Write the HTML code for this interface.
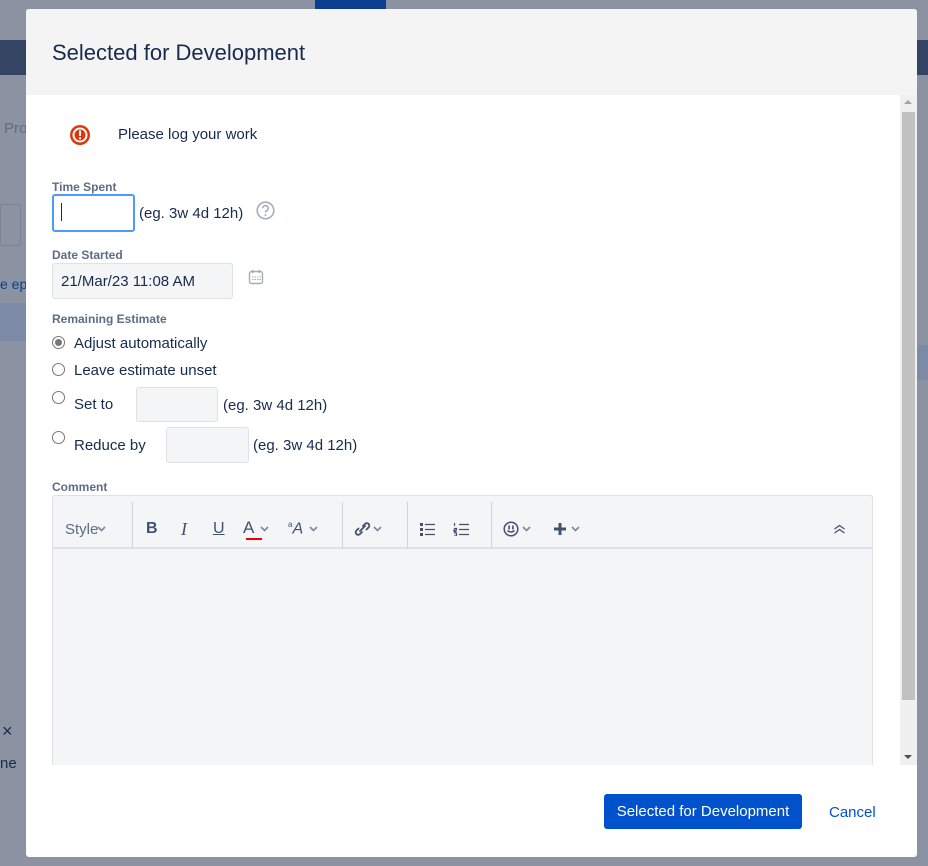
<!DOCTYPE html>
<html><head><style>
*{box-sizing:border-box;margin:0;padding:0}
body{width:928px;height:866px;overflow:hidden;background:#8b93a3;font-family:"Liberation Sans",sans-serif;position:relative;color:#172b4d}
.a{position:absolute}
.lbl{font-size:12px;font-weight:bold;color:#5e6c84}
.t{font-size:15px;color:#172b4d}
.radio{width:13px;height:13px;border:1px solid #777;border-radius:50%;background:#fff}
.inp{background:#f4f5f7;border:1px solid #dfe1e6;border-radius:3px}
.tb{font-size:16px;color:#42526e}
.sep{width:1px;height:46px;background:#d0d3d9}
</style></head><body>
<div class="a" style="left:315px;top:0;width:71px;height:9px;background:#0b3f8d"></div>
<div class="a" style="left:0;top:40px;width:26px;height:35px;background:#344563"></div>
<div class="a" style="left:917px;top:40px;width:11px;height:35px;background:#344563"></div>
<div class="a" style="left:0;top:303px;width:26px;height:38px;background:#7d8aa6"></div>
<div class="a" style="left:917px;top:345px;width:11px;height:35px;background:#7d8aa6"></div>
<div class="a" style="left:4px;top:120px;font-size:15px;color:#5e6c84">Pro</div>
<div class="a" style="left:0;top:276px;font-size:14px;color:#0b3f8d">e ep</div>
<div class="a" style="left:0;top:204px;width:21px;height:42px;border:1px solid #7a8293;border-radius:3px"></div>
<div class="a" style="left:2px;top:721px;font-size:18px;color:#172b4d">×</div>
<div class="a" style="left:0;top:755px;font-size:15px;color:#172b4d">ne</div>

<div class="a" style="left:26px;top:9px;width:891px;height:848px;background:#fff;border-radius:3px;overflow:hidden">
 <div class="a" style="left:0;top:0;width:891px;height:86px;background:#f4f4f4"></div>
 <div class="a" style="left:26px;top:31px;font-size:22px;color:#172b4d">Selected for Development</div>
 <div class="a" style="left:874px;top:86px;width:17px;height:670px;background:#f0f0f0"></div>
 <div class="a" style="left:876px;top:103px;width:13px;height:588px;background:#c1c1c1"></div>
 <div class="a" style="left:878px;top:91px;width:0;height:0;border-left:4px solid transparent;border-right:4px solid transparent;border-bottom:4px solid #a3a3a3"></div>
 <div class="a" style="left:878px;top:746px;width:0;height:0;border-left:4px solid transparent;border-right:4px solid transparent;border-top:4px solid #505050"></div>
</div>

<svg class="a" style="left:68px;top:123px" width="24" height="24" viewBox="0 0 24 24"><circle cx="12" cy="12" r="10" fill="#de350b"/><circle cx="12" cy="12" r="6.5" fill="none" stroke="#fff" stroke-width="2"/><rect x="11" y="7.5" width="2" height="5.5" fill="#fff"/><rect x="11" y="14.2" width="2" height="2" fill="#fff"/></svg>
<div class="a t" style="left:118px;top:126px">Please log your work</div>

<div class="a lbl" style="left:52px;top:180px">Time Spent</div>
<div class="a" style="left:52px;top:194px;width:83px;height:38px;border:2px solid #4c9aff;border-radius:3px;background:#fff"></div>
<div class="a" style="left:61px;top:203px;width:1px;height:18px;background:#172b4d"></div>
<div class="a t" style="left:139px;top:205px">(eg. 3w 4d 12h)</div>
<svg class="a" style="left:256px;top:201px" width="19" height="19" viewBox="0 0 19 19"><circle cx="9.5" cy="9.5" r="8.3" fill="none" stroke="#a5adba" stroke-width="1.6"/><path d="M6.8 7.3a2.7 2.7 0 1 1 3.8 2.4c-.8.4-1.1.9-1.1 1.8" fill="none" stroke="#a5adba" stroke-width="1.6"/><circle cx="9.5" cy="14" r="1" fill="#a5adba"/></svg>

<div class="a lbl" style="left:52px;top:248px">Date Started</div>
<div class="a inp" style="left:52px;top:263px;width:181px;height:36px"></div>
<div class="a t" style="left:61px;top:273px">21/Mar/23 11:08 AM</div>
<svg class="a" style="left:248px;top:269px" width="17" height="16" viewBox="0 0 17 16"><rect x="1.5" y="2.5" width="13" height="12" rx="2" fill="none" stroke="#a5adba" stroke-width="1.4"/><rect x="4" y="1" width="1.5" height="3" fill="#a5adba"/><rect x="10.5" y="1" width="1.5" height="3" fill="#a5adba"/><path d="M4 8h9M4 10.5h9" stroke="#a5adba" stroke-width="1" stroke-dasharray="1.5 1"/></svg>

<div class="a lbl" style="left:52px;top:312px">Remaining Estimate</div>
<div class="a radio" style="left:52px;top:336px"></div>
<div class="a" style="left:55px;top:339px;width:7px;height:7px;border-radius:50%;background:#777"></div>
<div class="a t" style="left:74px;top:335px">Adjust automatically</div>
<div class="a radio" style="left:52px;top:363px"></div>
<div class="a t" style="left:74px;top:362px">Leave estimate unset</div>
<div class="a radio" style="left:52px;top:391px"></div>
<div class="a t" style="left:74px;top:396px">Set to</div>
<div class="a inp" style="left:136px;top:387px;width:82px;height:35px"></div>
<div class="a t" style="left:223px;top:397px">(eg. 3w 4d 12h)</div>
<div class="a radio" style="left:52px;top:431px"></div>
<div class="a t" style="left:74px;top:437px">Reduce by</div>
<div class="a inp" style="left:166px;top:427px;width:83px;height:36px"></div>
<div class="a t" style="left:253px;top:437px">(eg. 3w 4d 12h)</div>

<div class="a lbl" style="left:52px;top:480px">Comment</div>
<div class="a" style="left:52px;top:495px;width:821px;height:270px;background:#f4f5f7;border:1px solid #dfe1e6;border-bottom:none;border-radius:3px 3px 0 0"></div>
<div class="a" style="left:53px;top:547px;width:819px;height:2px;background:#dfe1e6"></div>
<div class="a" style="left:65px;top:521px;font-size:15px;color:#5e6c84">Style</div>
<div class="a sep" style="left:132px;top:502px"></div>
<div class="a tb" style="left:146px;top:520px;font-weight:bold">B</div>
<div class="a tb" style="left:181px;top:519px;font-style:italic;font-family:'Liberation Serif',serif;font-size:18px">I</div>
<div class="a tb" style="left:213px;top:520px;text-decoration:underline">U</div>
<div class="a tb" style="left:243px;top:518px;font-size:17px">A</div>
<div class="a" style="left:246px;top:538px;width:16px;height:2px;background:#e00"></div>
<div class="a tb" style="left:288px;top:520px;font-style:italic"><sup style="font-size:8px;font-style:normal">a</sup>A</div>
<div class="a sep" style="left:342px;top:502px"></div>
<svg class="a" style="left:352px;top:520px" width="20" height="18" viewBox="0 0 20 18"><path d="M8 11l5-5M6.5 8.5l-2.3 2.3a2.5 2.5 0 0 0 3.5 3.5L10 12M11 6l2.3-2.3a2.5 2.5 0 0 1 3.5 3.5L14.5 9.5" fill="none" stroke="#42526e" stroke-width="1.8" stroke-linecap="round"/></svg>
<div class="a sep" style="left:407px;top:502px"></div>
<svg class="a" style="left:419px;top:522px" width="18" height="14" viewBox="0 0 18 14"><rect x="1" y="1" width="3" height="3" fill="#42526e"/><rect x="1" y="6" width="3" height="3" fill="#42526e"/><rect x="1" y="11" width="3" height="3" fill="#42526e"/><path d="M6 2.5h10M6 7.5h10M6 12.5h10" stroke="#42526e" stroke-width="1.3"/></svg>
<svg class="a" style="left:453px;top:522px" width="18" height="14" viewBox="0 0 18 14"><path d="M1.5 1v3M1 6.5h2.5v1.5h-2.5v1.5h2.5M1 11h2.5v3h-2.5M6 2.5h10M6 7.5h10M6 12.5h10" fill="none" stroke="#42526e" stroke-width="1.2"/></svg>
<div class="a sep" style="left:491px;top:502px"></div>
<svg class="a" style="left:503px;top:521px" width="16" height="16" viewBox="0 0 16 16"><circle cx="8" cy="8" r="6.8" fill="none" stroke="#42526e" stroke-width="1.5"/><rect x="5.3" y="4.5" width="1.6" height="4" fill="#42526e"/><rect x="9.1" y="4.5" width="1.6" height="4" fill="#42526e"/><path d="M4.5 9.5q3.5 3 7 0" fill="none" stroke="#42526e" stroke-width="1.5"/></svg>
<svg class="a" style="left:553px;top:522px" width="14" height="14" viewBox="0 0 14 14"><path d="M7 1v12M1 7h12" stroke="#42526e" stroke-width="3"/></svg>
<svg class="a" style="left:833px;top:524px" width="13" height="10" viewBox="0 0 13 10"><path d="M1.5 5l5-3.5 5 3.5M1.5 9l5-3.5 5 3.5" fill="none" stroke="#42526e" stroke-width="1.3"/></svg>
<!-- chevrons -->
<svg class="a" style="left:0;top:0" width="928" height="866" viewBox="0 0 928 866" fill="none" stroke="#7a869a" stroke-width="1.6">
<path d="M98 527l3.5 3.5 3.5-3.5"/><path d="M261 527l3.5 3.5 3.5-3.5"/><path d="M310 527l3.5 3.5 3.5-3.5"/><path d="M374 527l3.5 3.5 3.5-3.5"/><path d="M523 527l3.5 3.5 3.5-3.5"/><path d="M572 527l3.5 3.5 3.5-3.5"/>
</svg>

<div class="a" style="left:604px;top:794px;width:198px;height:35px;background:#0052cc;border-radius:3px;color:#fff;font-size:15px;text-align:center;line-height:35px">Selected for Development</div>
<div class="a" style="left:829px;top:804px;font-size:15px;color:#0052cc">Cancel</div>
</body></html>
